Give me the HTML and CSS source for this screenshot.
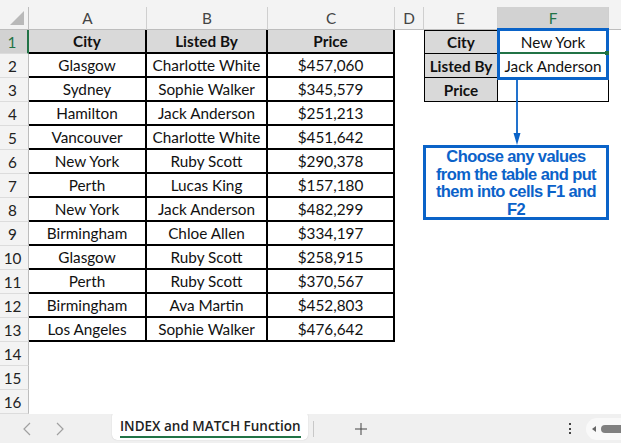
FILE: index.html
```html
<!DOCTYPE html>
<html lang="en">
<head>
    <meta charset="UTF-8">
    <meta name="viewport" content="width=device-width, initial-scale=1.0">
    <title>INDEX and MATCH Function</title>
    <link rel="stylesheet" href="styles.css">
</head>
<body>
    <div class="sheet">
        <div class="strip"></div>

        <div class="hd corner"><span class="tri"></span></div>
        <div class="hd">A</div>
        <div class="hd">B</div>
        <div class="hd">C</div>
        <div class="hd">D</div>
        <div class="hd">E</div>
        <div class="hd hd-sel">F</div>
        <div class="hd last"></div>

        <div class="rn rn-sel">1</div>
        <div class="t th">City</div><div class="t th">Listed By</div><div class="t th">Price</div>
        <div class="c"></div>
        <div class="e top">City</div><div class="f top">New York</div><div class="c"></div>

        <div class="rn">2</div>
        <div class="t">Glasgow</div><div class="t">Charlotte White</div><div class="t">$457,060</div>
        <div class="c"></div>
        <div class="e">Listed By</div><div class="f">Jack Anderson</div><div class="c"></div>

        <div class="rn">3</div>
        <div class="t">Sydney</div><div class="t">Sophie Walker</div><div class="t">$345,579</div>
        <div class="c"></div>
        <div class="e">Price</div><div class="f"></div><div class="c"></div>

        <div class="rn">4</div>
        <div class="t">Hamilton</div><div class="t">Jack Anderson</div><div class="t">$251,213</div>
        <div class="c"></div><div class="c"></div><div class="c"></div><div class="c"></div>

        <div class="rn">5</div>
        <div class="t">Vancouver</div><div class="t">Charlotte White</div><div class="t">$451,642</div>
        <div class="c"></div><div class="c"></div><div class="c"></div><div class="c"></div>

        <div class="rn">6</div>
        <div class="t">New York</div><div class="t">Ruby Scott</div><div class="t">$290,378</div>
        <div class="c"></div><div class="c"></div><div class="c"></div><div class="c"></div>

        <div class="rn">7</div>
        <div class="t">Perth</div><div class="t">Lucas King</div><div class="t">$157,180</div>
        <div class="c"></div><div class="c"></div><div class="c"></div><div class="c"></div>

        <div class="rn">8</div>
        <div class="t">New York</div><div class="t">Jack Anderson</div><div class="t">$482,299</div>
        <div class="c"></div><div class="c"></div><div class="c"></div><div class="c"></div>

        <div class="rn">9</div>
        <div class="t">Birmingham</div><div class="t">Chloe Allen</div><div class="t">$334,197</div>
        <div class="c"></div><div class="c"></div><div class="c"></div><div class="c"></div>

        <div class="rn">10</div>
        <div class="t">Glasgow</div><div class="t">Ruby Scott</div><div class="t">$258,915</div>
        <div class="c"></div><div class="c"></div><div class="c"></div><div class="c"></div>

        <div class="rn">11</div>
        <div class="t">Perth</div><div class="t">Ruby Scott</div><div class="t">$370,567</div>
        <div class="c"></div><div class="c"></div><div class="c"></div><div class="c"></div>

        <div class="rn">12</div>
        <div class="t">Birmingham</div><div class="t">Ava Martin</div><div class="t">$452,803</div>
        <div class="c"></div><div class="c"></div><div class="c"></div><div class="c"></div>

        <div class="rn">13</div>
        <div class="t">Los Angeles</div><div class="t">Sophie Walker</div><div class="t">$476,642</div>
        <div class="c"></div><div class="c"></div><div class="c"></div><div class="c"></div>

        <div class="rn">14</div>
        <div class="c"></div><div class="c"></div><div class="c"></div><div class="c"></div>
        <div class="c"></div><div class="c"></div><div class="c"></div>

        <div class="rn">15</div>
        <div class="c"></div><div class="c"></div><div class="c"></div><div class="c"></div>
        <div class="c"></div><div class="c"></div><div class="c"></div>

        <div class="rn">16</div>
        <div class="c"></div><div class="c"></div><div class="c"></div><div class="c"></div>
        <div class="c"></div><div class="c"></div><div class="c"></div>

        <!-- drawn on top of the grid -->
        <div class="active-line"></div>
        <div class="sel-box"></div>
        <div class="fill-handle"></div>
        <svg class="arrow" width="14" height="66" viewBox="0 0 14 66">
            <line x1="7" y1="0" x2="7" y2="55" stroke="#0a63c8" stroke-width="1.8"/>
            <polygon points="3.5,53 10.5,53 7,65" fill="#0a63c8"/>
        </svg>
        <div class="callout">Choose any values from the table and put them into cells F1 and F2</div>
    </div>

    <div class="tabs">
        <div class="nav">
            <svg width="10" height="14" viewBox="0 0 10 14"><polyline points="8,1 2,7 8,13" fill="none" stroke="#a0a0a0" stroke-width="1.2"/></svg>
            <svg width="10" height="14" viewBox="0 0 10 14"><polyline points="2,1 8,7 2,13" fill="none" stroke="#a0a0a0" stroke-width="1.2"/></svg>
        </div>
        <div class="tab"><span class="tab-name">INDEX and MATCH Function</span></div>
        <div class="sep"></div>
        <div class="add">
            <svg width="12" height="12" viewBox="0 0 12 12"><line x1="6" y1="0" x2="6" y2="12" stroke="#444" stroke-width="1"/><line x1="0" y1="6" x2="12" y2="6" stroke="#444" stroke-width="1"/></svg>
        </div>
        <div class="kebab"><i></i><i></i><i></i></div>
        <div class="scroll"><span class="left-tri"></span><span class="thumb"></span></div>
    </div>
</body>
</html>
```

FILE: styles.css
```css
body {
    margin: 0;
    width: 621px;
    height: 443px;
    overflow: hidden;
    background: #fff;
    font-family: "Lato", "Open Sans", sans-serif;
}

.sheet {
    position: relative;
    display: grid;
    grid-template-columns: 29px 118px 121px 127px 29px 74px 111px 12px;
    grid-template-rows: 7px 23px repeat(16, 24px);
    font-size: 15.3px;
    color: #111;
}

.strip {
    grid-column: 1 / -1;
    background: #f3f3f3;
}

.hd {
    background: #f3f3f3;
    border-right: 1px solid #cfcfcf;
    border-bottom: 1px solid #bdbdbd;
    color: #444;
    display: flex;
    align-items: center;
    justify-content: center;
    box-sizing: border-box;
}
.hd.last { border-right: none; }
.hd-sel {
    background: #d2d2d2;
    color: #217346;
    border-bottom: 2px solid #217346;
}

.corner {
    position: relative;
    border-right: 1px solid #bdbdbd;
}
.tri {
    position: absolute;
    right: 4px;
    bottom: 4px;
    width: 0;
    height: 0;
    border-left: 14px solid transparent;
    border-bottom: 14px solid #b9b9b9;
}

.rn {
    background: #f3f3f3;
    border-right: 1px solid #bdbdbd;
    border-bottom: 1px solid #dcdcdc;
    box-sizing: border-box;
    display: flex;
    align-items: center;
    justify-content: center;
    padding-right: 3px;
    color: #222;
}
.rn-sel {
    background: #d2d2d2;
    color: #217346;
    border-right: 2px solid #217346;
}

.c { background: #fff; }

.t, .e, .f {
    box-sizing: border-box;
    display: flex;
    align-items: center;
    justify-content: center;
    white-space: nowrap;
}
.t {
    border-right: 2px solid #000;
    border-bottom: 2px solid #000;
}
.th {
    background: #d9d9d9;
    font-weight: bold;
}
.e {
    background: #d9d9d9;
    font-weight: bold;
    border-left: 1px solid #000;
    border-right: 1px solid #000;
    border-bottom: 1px solid #000;
}
.f {
    border-right: 1px solid #000;
    border-bottom: 1px solid #000;
}
.top { border-top: 1px solid #000; }

.active-line {
    position: absolute;
    left: 498px;
    top: 52px;
    width: 108px;
    height: 2px;
    background: #217346;
}
.fill-handle {
    position: absolute;
    left: 605px;
    top: 51px;
    width: 4px;
    height: 4px;
    background: #217346;
}
.sel-box {
    position: absolute;
    left: 497px;
    top: 28px;
    width: 112px;
    height: 52px;
    border: 3px solid #0a63c8;
    box-sizing: border-box;
}
.arrow {
    position: absolute;
    left: 510px;
    top: 80px;
}
.callout {
    position: absolute;
    left: 423px;
    top: 145px;
    width: 186px;
    height: 75px;
    box-sizing: border-box;
    border: 3px solid #0a63c8;
    background: #fff;
    color: #0b62c9;
    font-family: "Liberation Sans", Arial, sans-serif;
    font-weight: bold;
    font-size: 16.5px;
    letter-spacing: -0.6px;
    line-height: 17.6px;
    text-align: center;
    padding: 0 6px;
}

.tabs {
    display: flex;
    align-items: center;
    height: 29px;
    background: #f0f0f0;
    font-family: "Open Sans", sans-serif;
}
.nav {
    width: 112px;
    display: flex;
    gap: 23px;
    padding-left: 22px;
    box-sizing: border-box;
}
.tab {
    align-self: flex-start;
    margin-top: -3px;
    width: 196px;
    height: 29px;
    background: #fff;
    border-radius: 5px;
    box-shadow: 0 0 1px rgba(0, 0, 0, 0.25);
    box-sizing: border-box;
    padding: 3px 0 0 8px;
}
.tab-name {
    display: inline-block;
    font-size: 13.5px;
    font-weight: 600;
    color: #222;
    line-height: 18px;
    padding-bottom: 1px;
    border-bottom: 2px solid #217346;
}
.sep {
    width: 1px;
    height: 16px;
    background: #c8c8c8;
    margin-left: 5px;
}
.add {
    margin-left: 41px;
    display: flex;
}
.kebab {
    margin-left: 202px;
    display: flex;
    flex-direction: column;
    gap: 2.5px;
}
.kebab i {
    display: block;
    width: 2px;
    height: 2px;
    background: #444;
}
.scroll {
    margin-left: 15px;
    flex: 1;
    height: 22px;
    background: #f9f9f9;
    border-radius: 11px 0 0 11px;
    display: flex;
    align-items: center;
    padding-left: 6px;
}
.left-tri {
    width: 0;
    height: 0;
    border-top: 3.5px solid transparent;
    border-bottom: 3.5px solid transparent;
    border-right: 4px solid #666;
}
.thumb {
    margin-left: 5px;
    flex: 1;
    height: 8px;
    background: #808080;
    border-radius: 4px 0 0 4px;
}
```
